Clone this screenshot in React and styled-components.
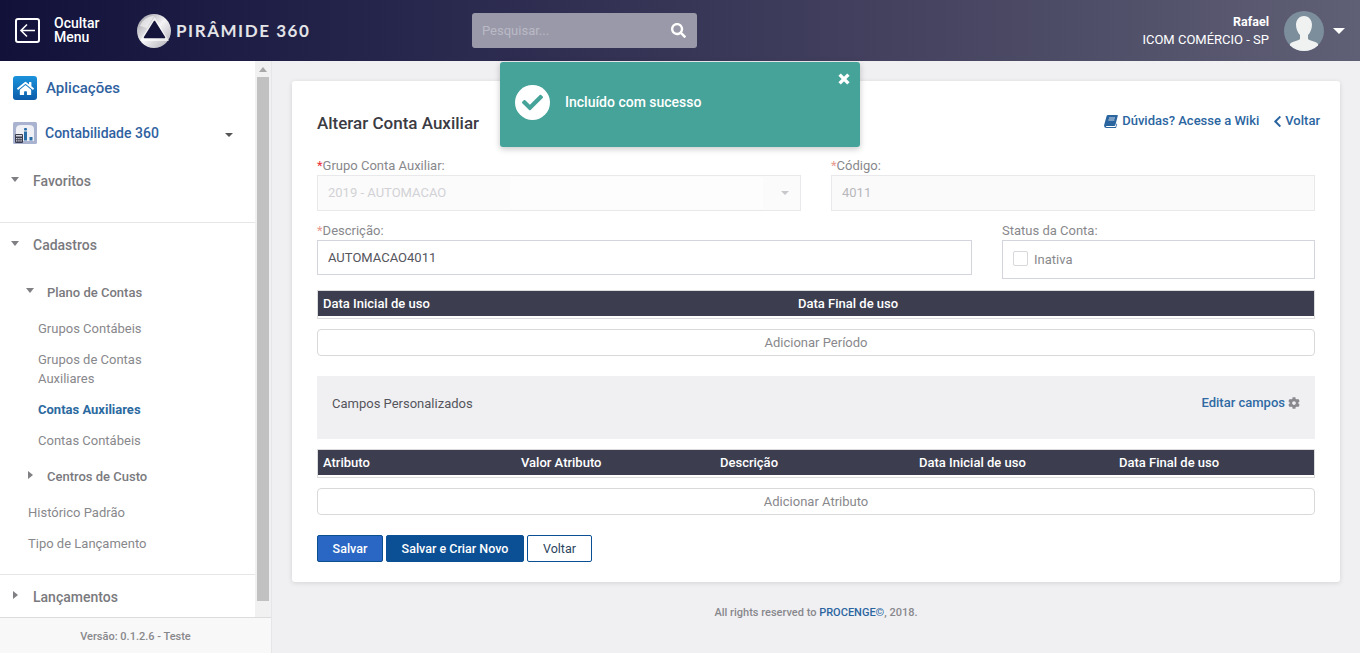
import React from "react";
import styled, { createGlobalStyle } from "styled-components";
import { FaCheck, FaChevronLeft, FaCog, FaHome, FaSearch } from "react-icons/fa";

const Global = createGlobalStyle`
  html, body { margin: 0; padding: 0; height: 100%; overflow: hidden; }
  body { font-family: Roboto, "Liberation Sans", sans-serif; font-size: 13px; background: #f0f0f3; }
  * { box-sizing: border-box; }
`;

const Page = styled.div`
  height: 653px; display: flex; flex-direction: column; position: relative; overflow: hidden;
`;
const Header = styled.header`
  height: 61px; flex: none; display: flex; align-items: center; color: #fff;
  background: linear-gradient(90deg, #11113a 0%, #23234a 25%, #43415e 65%, #5f5f75 100%);
`;
const BackBox = styled.div`
  width: 25px; height: 25px; margin-left: 15px; border: 2px solid #fff; border-radius: 3px;
  display: flex; align-items: center; justify-content: center;
`;
const HideLabel = styled.div`
  width: 60px; margin: 0 0 2px 14px; font-size: 14px; font-weight: 500; line-height: 14px;
`;
const Logo = styled.div`
  display: flex; align-items: center; gap: 5px; margin-left: 23px; width: 335px;
`;
const LogoText = styled.span`
  font-family: Lato, sans-serif; font-size: 17px; font-weight: 700; letter-spacing: 1.55px; color: #e4e4e8; white-space: nowrap;
`;
const Search = styled.div`
  width: 225px; height: 35px; border-radius: 3px; background: #9a99a9; display: flex; align-items: center;
  justify-content: space-between; padding: 0 11px 0 10px; color: #fff; font-size: 15px;
`;
const Placeholder = styled.span`
  font-size: 13px; color: #b9b9c6;
`;
const User = styled.div`
  margin-left: auto; display: flex; align-items: center;
`;
const UserText = styled.div`
  text-align: right; margin-right: 15px; margin-top: 1px;
`;
const UserName = styled.div`
  font-size: 12.5px; font-weight: 700; line-height: 18px;
`;
const UserCompany = styled.div`
  font-size: 13px; font-weight: 400; line-height: 18px;
`;
const Avatar = styled.div`
  width: 40px; height: 40px; border-radius: 50%; overflow: hidden; background: #7c8e9b; margin-right: 9px;
`;
const Caret = styled.span`
  width: 0; height: 0; border-left: 6px solid transparent; border-right: 6px solid transparent;
  border-top: 6px solid #fff; margin-right: 15px;
`;

const Body = styled.div`
  flex: 1; display: flex; min-height: 0;
`;
const Sidebar = styled.aside`
  width: 272px; flex: none; display: flex; flex-direction: column; border-right: 1px solid #e6e6e8; background: #fff;
`;
const SideTop = styled.div`
  height: 556px; display: flex; overflow: hidden;
`;
const Nav = styled.nav`
  width: 255px; flex: none;
`;
const ScrollTrack = styled.div`
  width: 16px; background: #f1f1f1; padding: 0 2px; display: flex; flex-direction: column; align-items: center;
`;
const ScrollArrow = styled.span`
  flex: none; margin: 6px 0 5px; height: 5px; width: 8px; border-left: 4px solid transparent; border-right: 4px solid transparent;
  border-bottom: 5px solid #a8a8a8;
`;
const ScrollThumb = styled.div`
  width: 12px; height: 524px; background: #c1c1c1;
`;
const AppRow = styled.div`
  height: ${p => p.$h}px; display: flex; align-items: center; padding-left: 13px; color: #2f629f; position: relative;
  font-size: ${p => p.$size}px; font-weight: 500; gap: ${p => p.$gap}px;
`;
const AppIcon = styled.div`
  width: 24px; height: 24px; border-radius: 3px; display: flex; align-items: center; justify-content: center; overflow: hidden;
  background: linear-gradient(180deg, #1b93dc 0%, #0b5ca9 100%); color: #fff; font-size: 17px;
`;
const ModCaret = styled.span`
  margin-left: auto; margin-right: 22px; margin-top: 4px; width: 0; height: 0;
  border-left: 4px solid transparent; border-right: 4px solid transparent; border-top: 4px solid #555;
`;
const Section = styled.div`
  border-bottom: ${p => (p.$line ? "1px solid #e6e6e6" : "0")};
  padding-top: ${p => p.$pt || 0}px; padding-bottom: ${p => p.$pb || 0}px;
`;
const Head = styled.div`
  height: ${p => p.$h}px; display: flex; align-items: center; padding-left: ${p => p.$indent}px; padding-top: ${p => p.$pt || 0}px; color: #7a7a7e;
  font-size: ${p => p.$size}px; font-weight: 500;
`;
const ArrowSlot = styled.span`
  width: ${p => p.$w}px; flex: none; display: flex; align-items: center;
`;
const Down = styled.span`
  width: 0; height: 0; border-left: 4.5px solid transparent; border-right: 4.5px solid transparent; border-top: 5px solid #808084; margin-top: -3px;
`;
const Right = styled.span`
  width: 0; height: 0; border-top: 4.5px solid transparent; border-bottom: 4.5px solid transparent; border-left: 5px solid #808084; margin-left: 2px; margin-top: -3px;
`;
const Sub = styled.div`
  padding: 6px 20px 6px ${p => p.$indent}px; line-height: 19px; width: 180px;
  font-size: 13px; color: ${p => (p.$active ? "#2b6a9f" : "#88888c")}; font-weight: ${p => (p.$active ? 700 : 400)};
`;
const SideFoot = styled.div`
  height: 36px; flex: none; background: #f8f8f8; border-top: 1px solid #dcdcdc; display: flex; align-items: center; justify-content: center;
  font-size: 11px; font-weight: 500; color: #88888c; padding-top: 2px;
`;

const Main = styled.main`
  flex: 1; padding: 20px 20px 0; background: #f0f0f3;
`;
const Card = styled.section`
  height: 501px; background: #fff; border-radius: 3px; box-shadow: 0 1px 5px rgba(0,0,0,.12); padding: 0 25px;
`;
const CardHead = styled.div`
  height: 67px; display: flex; align-items: flex-end; justify-content: space-between; padding-bottom: 14px; margin-right: -5px;
`;
const Title = styled.h1`
  margin: 0; font-size: 17px; font-weight: 500; color: #3b3b44; line-height: 19px; position: relative; top: -1px;
`;
const HeadLinks = styled.div`
  display: flex; gap: 12px; color: #2b659f; font-size: 13px; font-weight: 500; position: relative; top: -4px;
`;
const HeadLink = styled.span`
  display: flex; align-items: center; gap: ${p => p.$gap}px; line-height: 18px;
  > svg { font-size: ${p => p.$icon}px; }
`;
const FormRow = styled.div`
  display: grid; grid-template-columns: ${p => p.$cols}; column-gap: 30px; margin-top: ${p => p.$mt}px; height: ${p => p.$h}px;
`;
const Label = styled.div`
  font-size: 13px; color: #88888c; line-height: 16px; height: 17px;
`;
const Star = styled.span`
  color: ${p => (p.$strong ? "#e8303a" : "#e89a90")};
`;
const Disabled = styled.div`
  height: 36px; border: 1px solid #e9e9ec; background: ${p => (p.$select ? "#fbfbfb" : "#fafafa")}; color: ${p => (p.$select ? "#d2d2d6" : "#b8b8bc")};
  display: flex; align-items: center; padding: 0 0 2px 10px; position: relative;
`;
const SelectBand = styled.span`
  position: absolute; left: 192px; right: 37px; top: 1px; bottom: 1px; background: #fdfdfd;
`;
const SelectCaret = styled.span`
  position: absolute; right: 11px; top: 15px; width: 0; height: 0;
  border-left: 4px solid transparent; border-right: 4px solid transparent; border-top: 4px solid #c8c8cc;
`;
const Input = styled.div`
  height: 35px; border: 1px solid #d3d5dd; color: #55555c; display: flex; align-items: center; padding-left: 10px; background: #fff;
`;
const StatusBox = styled.div`
  height: 39px; border: 1px solid #d3d5dd; display: flex; align-items: center; padding: 0 0 0 10px; gap: 6px; color: #88888c;
`;
const Check = styled.span`
  width: 15px; height: 15px; border: 1px solid #d8d8dc; border-radius: 2px; background: #fff; margin-top: -2px;
`;
const TableHead = styled.div`
  margin-top: ${p => p.$mt}px; height: 29px; border: 1px solid #dcdcdc; padding-bottom: 2px; background: #fff;
`;
const HeadCells = styled.div`
  height: 25px; background: #3c3e50; color: #fff; display: grid; grid-template-columns: ${p => p.$cols};
  font-size: 13px; font-weight: 500; align-items: center;
`;
const HeadCell = styled.span`
  padding-left: 5px;
`;
const AddBtn = styled.div`
  margin-top: 10px; height: 27px; border: 1px solid #d9d9dc; border-radius: 4px; display: flex; align-items: center; justify-content: center;
  color: #88888c; font-size: 13px;
`;
const Panel = styled.div`
  margin-top: 20px; height: 63px; background: #f0f0f3; padding: 19px 15px 0; display: flex; justify-content: space-between; align-items: flex-start;
  color: #55555c; line-height: 18px;
`;
const EditLink = styled.span`
  display: flex; align-items: center; gap: 3px; color: #2f6aa3; font-weight: 500; position: relative; top: -1px;
`;
const Gear = styled.span`
  color: #8a8a8e; font-size: 12px; display: flex;
`;
const Actions = styled.div`
  display: flex; gap: 3px; margin-top: 20px;
`;
const Btn = styled.div`
  height: 27px; width: ${p => p.$w}px; border-radius: 2px; display: flex; align-items: center; justify-content: center; font-size: 12.5px;
  font-weight: ${p => p.$weight};
  background: ${p => p.$bg}; color: ${p => p.$fg}; border: 1px solid ${p => p.$bd};
`;
const Copy = styled.footer`
  margin-top: 24px; text-align: center; font-size: 11px; font-weight: 500; color: #88888c; line-height: 14px;
`;
const Brand = styled.span`
  color: #2b659f;
`;
const Toast = styled.div`
  position: absolute; left: 500px; top: 62px; width: 360px; height: 85px; background: #45a39a; border-radius: 3px;
  box-shadow: 0 2px 6px rgba(0,0,0,.22); color: #fff; display: flex; align-items: center; padding: 0 0 5px 15px;
`;
const ToastCircle = styled.div`
  width: 35px; height: 35px; border-radius: 50%; background: #fff; color: #45a39a; display: flex; align-items: center; justify-content: center; font-size: 21px;
`;
const ToastText = styled.span`
  margin-left: 15px; font-size: 14px; font-weight: 500;
`;
const ToastClose = styled.span`
  position: absolute; right: 10px; top: 11px; display: flex;
`;

const LogoMark = () => (
  <svg width="34" height="34" viewBox="0 0 34 34">
    <defs>
      <linearGradient id="ring" x1="0" y1="0" x2="1" y2="1">
        <stop offset="0" stopColor="#8f8f98" />
        <stop offset=".5" stopColor="#f4f4f6" />
        <stop offset="1" stopColor="#a8a8b0" />
      </linearGradient>
    </defs>
    <circle cx="17" cy="17" r="17" fill="url(#ring)" />
    <path d="M3 12 A15 15 0 0 1 17 2 L10 14 Z" fill="#fff" opacity=".55" />
    <path d="M17.5 3 L32 27 H3 Z" fill="#fff" opacity=".65" />
    <path d="M17.5 7.5 L27.5 23.5 H7.5 Z" fill="#15153c" stroke="#15153c" strokeWidth="1.5" strokeLinejoin="round" />
  </svg>
);

const BookIcon = () => (
  <svg width="14" height="13" viewBox="0 0 14 13">
    <path d="M4 0 H13.4 Q14 0 13.8 .8 L11.4 10 Q11.2 11 10.2 11 H2.8 Q1.6 11 1.8 11.6 Q2 12 2.8 12 H11.5 L12.6 8.6 L13.2 9 L12 13 H2.5 Q.2 13 .1 11 Q0 10.4 .3 9.5 L2.6 1 Q2.9 0 4 0 Z" fill="#2b659f" />
    <path d="M5 3 H11 M4.4 5 H10.4" stroke="#dfe8f1" strokeWidth=".9" />
  </svg>
);

const ModuleIcon = () => (
  <svg width="24" height="22" viewBox="0 0 24 22">
    <rect width="24" height="22" rx="1.5" fill="#a9b3cf" />
    <path d="M3 17 V7 Q3 3 8 3 H16 Q21 3 21 7 V19 H3 Z" fill="#eef0f5" />
    <rect x="11" y="6" width="3" height="2.5" rx="1" fill="#2a6ea8" />
    <rect x="11" y="9.5" width="3" height="9" fill="#2a6ea8" />
    <rect x="16.5" y="15" width="3" height="3.5" fill="#2a6ea8" />
    <rect x="2" y="12" width="8" height="9" rx="1" fill="#3c3e50" />
    <rect x="3" y="13" width="6" height="1.5" fill="#d6d8e0" />
    <path d="M3 16h1.4v1.2H3zM5.2 16h1.4v1.2H5.2zM7.4 16h1.4v1.2H7.4zM3 18.2h1.4v1.2H3zM5.2 18.2h1.4v1.2H5.2zM7.4 18.2h1.4v1.2H7.4z" fill="#d6d8e0" />
  </svg>
);

export default function App() {
  return (
    <Page>
      <Global />
      <Header>
        <BackBox>
          <svg width="17" height="15" viewBox="0 0 17 15" fill="none" stroke="#fff" strokeWidth="1.6">
            <path d="M16 7.5H2M8 1.5L2 7.5L8 13.5" />
          </svg>
        </BackBox>
        <HideLabel>Ocultar<br />Menu</HideLabel>
        <Logo>
          <LogoMark />
          <LogoText>PIRÂMIDE 360</LogoText>
        </Logo>
        <Search>
          <Placeholder>Pesquisar...</Placeholder>
          <FaSearch />
        </Search>
        <User>
          <UserText>
            <UserName>Rafael</UserName>
            <UserCompany>ICOM COMÉRCIO - SP</UserCompany>
          </UserText>
          <Avatar>
            <svg width="40" height="40" viewBox="0 0 40 40">
              <path d="M20 5c5 0 8 4 8 9 0 4-2 8-4 10v4c2 2 8 2 10 5v7H6v-7c2-3 8-3 10-5v-4c-2-2-4-6-4-10 0-5 3-9 8-9z" fill="#f0f2f2" />
            </svg>
          </Avatar>
          <Caret />
        </User>
      </Header>
      <Body>
        <Sidebar>
          <SideTop>
            <Nav>
              <AppRow $h={54} $size={15} $gap={9}>
                <AppIcon><FaHome /></AppIcon>
                Aplicações
              </AppRow>
              <AppRow $h={36} $size={14} $gap={8}>
                <ModuleIcon />
                Contabilidade 360
                <ModCaret />
              </AppRow>
              <Section $line $pt={10} $pb={21}>
                <Head $h={40} $indent={11} $size={14}><ArrowSlot $w={22}><Down /></ArrowSlot>Favoritos</Head>
              </Section>
              <Section $line $pb={15}>
                <Head $h={44} $indent={11} $size={14}><ArrowSlot $w={22}><Down /></ArrowSlot>Cadastros</Head>
                <Head $h={46} $pt={4} $indent={26} $size={13}><ArrowSlot $w={21}><Down /></ArrowSlot>Plano de Contas</Head>
                <Sub $indent={38}>Grupos Contábeis</Sub>
                <Sub $indent={38}>Grupos de Contas Auxiliares</Sub>
                <Sub $indent={38} $active>Contas Auxiliares</Sub>
                <Sub $indent={38}>Contas Contábeis</Sub>
                <Head $h={41} $indent={26} $size={13}><ArrowSlot $w={21}><Right /></ArrowSlot>Centros de Custo</Head>
                <Sub $indent={28}>Histórico Padrão</Sub>
                <Sub $indent={28}>Tipo de Lançamento</Sub>
              </Section>
              <Head $h={43} $indent={11} $size={14}><ArrowSlot $w={22}><Right /></ArrowSlot>Lançamentos</Head>
            </Nav>
            <ScrollTrack>
              <ScrollArrow />
              <ScrollThumb />
            </ScrollTrack>
          </SideTop>
          <SideFoot>Versão: 0.1.2.6 - Teste</SideFoot>
        </Sidebar>
        <Main>
          <Card>
            <CardHead>
              <Title>Alterar Conta Auxiliar</Title>
              <HeadLinks>
                <HeadLink $gap={4}><BookIcon />Dúvidas? Acesse a Wiki</HeadLink>
                <HeadLink $gap={1} $icon={13}><FaChevronLeft />Voltar</HeadLink>
              </HeadLinks>
            </CardHead>
            <FormRow $cols="484px 484px" $mt={10} $h={55}>
              <div>
                <Label><Star $strong>*</Star>Grupo Conta Auxiliar:</Label>
                <Disabled $select>2019 - AUTOMACAO<SelectBand /><SelectCaret /></Disabled>
              </div>
              <div>
                <Label><Star>*</Star>Código:</Label>
                <Disabled>4011</Disabled>
              </div>
            </FormRow>
            <FormRow $cols="655px 313px" $mt={10} $h={50}>
              <div>
                <Label><Star>*</Star>Descrição:</Label>
                <Input>AUTOMACAO4011</Input>
              </div>
              <div>
                <Label>Status da Conta:</Label>
                <StatusBox><Check />Inativa</StatusBox>
              </div>
            </FormRow>
            <TableHead $mt={17}>
              <HeadCells $cols="475px 1fr">
                <HeadCell>Data Inicial de uso</HeadCell>
                <HeadCell>Data Final de uso</HeadCell>
              </HeadCells>
            </TableHead>
            <AddBtn>Adicionar Período</AddBtn>
            <Panel>
              <span>Campos Personalizados</span>
              <EditLink>Editar campos<Gear><FaCog /></Gear></EditLink>
            </Panel>
            <TableHead $mt={10}>
              <HeadCells $cols="198px 199px 199px 200px 1fr">
                <HeadCell>Atributo</HeadCell>
                <HeadCell>Valor Atributo</HeadCell>
                <HeadCell>Descrição</HeadCell>
                <HeadCell>Data Inicial de uso</HeadCell>
                <HeadCell>Data Final de uso</HeadCell>
              </HeadCells>
            </TableHead>
            <AddBtn>Adicionar Atributo</AddBtn>
            <Actions>
              <Btn $w={66} $weight={500} $bg="#2a67c4" $fg="#fff" $bd="#0b4f8f">Salvar</Btn>
              <Btn $w={138} $weight={500} $bg="#0b5094" $fg="#fff" $bd="#0b5094">Salvar e Criar Novo</Btn>
              <Btn $w={65} $weight={400} $bg="#fff" $fg="#2c4560" $bd="#0b5094">Voltar</Btn>
            </Actions>
          </Card>
          <Copy>All rights reserved to <Brand>PROCENGE©</Brand>, 2018.</Copy>
        </Main>
      </Body>
      <Toast>
        <ToastCircle><FaCheck /></ToastCircle>
        <ToastText>Incluído com sucesso</ToastText>
        <ToastClose>
          <svg width="12" height="12" viewBox="0 0 12 12" stroke="#fff" strokeWidth="3.4" fill="none">
            <path d="M1.6 1.6L10.4 10.4M10.4 1.6L1.6 10.4" />
          </svg>
        </ToastClose>
      </Toast>
    </Page>
  );
}
